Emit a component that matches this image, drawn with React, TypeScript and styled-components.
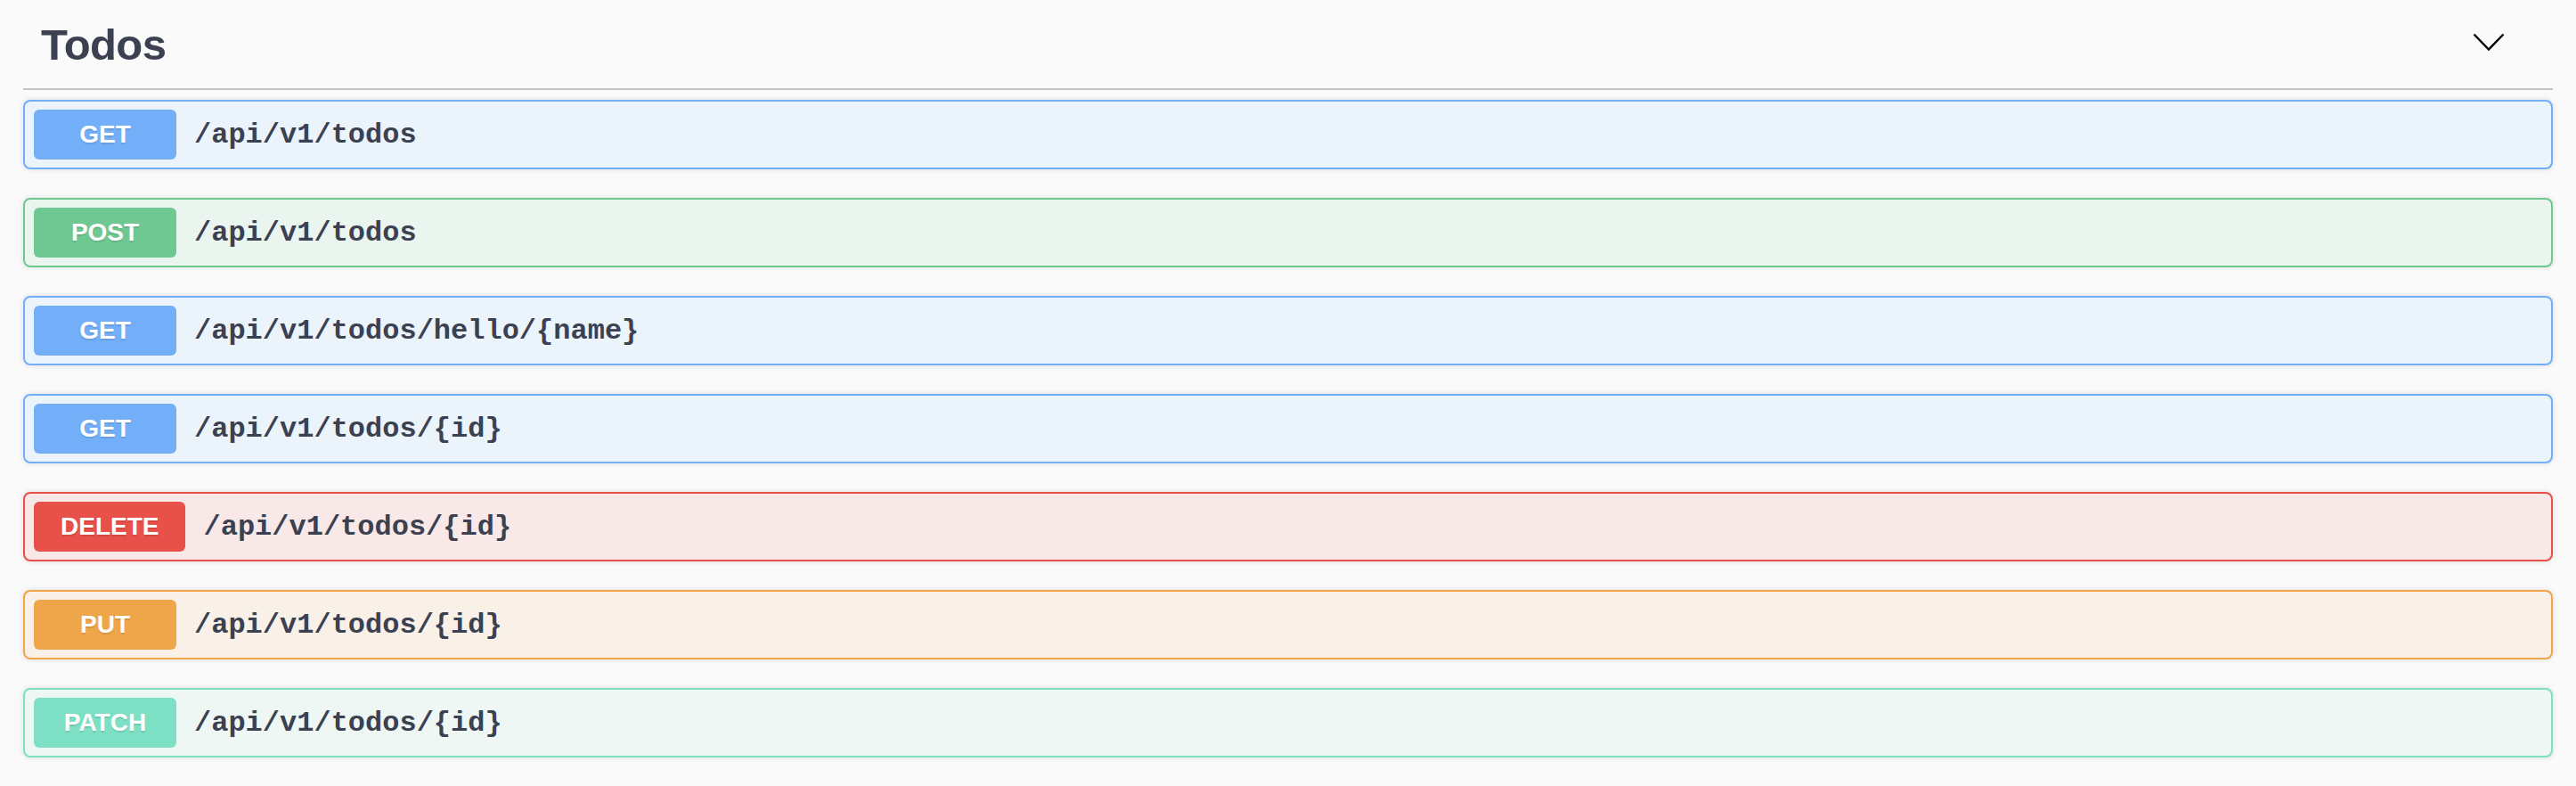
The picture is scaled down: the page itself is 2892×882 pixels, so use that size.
import React from 'react';
import styled, { createGlobalStyle } from 'styled-components';

type Method = 'GET' | 'POST' | 'DELETE' | 'PUT' | 'PATCH';

interface Operation {
    method: Method;
    path: string;
}

const methodColors : Record<Method, { main: string; bg: string }> = {
    GET: { main: '#73aef8', bg: '#ebf3fb' },
    POST: { main: '#6fc892', bg: '#ebf5ef' },
    DELETE: { main: '#e8504a', bg: '#f8e8e7' },
    PUT: { main: '#efa54a', bg: '#f9f1e8' },
    PATCH: { main: '#7ddfc3', bg: '#eef7f4' },
};

const operations : Operation[] = [
    { method: 'GET', path: '/api/v1/todos' },
    { method: 'POST', path: '/api/v1/todos' },
    { method: 'GET', path: '/api/v1/todos/hello/{name}' },
    { method: 'GET', path: '/api/v1/todos/{id}' },
    { method: 'DELETE', path: '/api/v1/todos/{id}' },
    { method: 'PUT', path: '/api/v1/todos/{id}' },
    { method: 'PATCH', path: '/api/v1/todos/{id}' },
];

const GlobalStyle = createGlobalStyle`
    html, body {
        margin: 0;
        padding: 0;
        background: #fafafa;
    }
    body {
        font-family: "Liberation Sans", Arial, sans-serif;
        color: #3b4151;
    }
`;

const Section = styled.section`
    padding: 0 26px 30px 26px;
`;

const TagHeader = styled.div`
    display: flex;
    align-items: center;
    justify-content: space-between;
    height: 99px;
    padding-left: 20px;
    border-bottom: 2px solid #c3c4c9;
`;

const TagTitle = styled.h3`
    margin: 0;
    font-family: "Liberation Sans", Arial, sans-serif;
    font-size: 49px;
    font-weight: 700;
    letter-spacing: -0.6px;
    color: #3b4151;
`;

const ChevronButton = styled.button`
    display: flex;
    align-items: center;
    justify-content: center;
    margin: 0 54px 5px 0;
    padding: 0;
    border: none;
    background: transparent;
    cursor: pointer;
`;

const OpList = styled.div`
    display: flex;
    flex-direction: column;
    gap: 32px;
    padding-top: 11px;
`;

const OpBlock = styled.div<{ $main: string; $bg: string }>`
    display: flex;
    align-items: center;
    height: 78px;
    box-sizing: border-box;
    padding: 0 10px;
    border: 2px solid ${p => p.$main};
    border-radius: 8px;
    background: ${p => p.$bg};
    box-shadow: 0 0 6px rgba(0, 0, 0, 0.12);
`;

const MethodBadge = styled.span<{ $main: string }>`
    display: flex;
    align-items: center;
    justify-content: center;
    min-width: 160px;
    height: 56px;
    box-sizing: border-box;
    padding: 0 30px;
    border-radius: 6px;
    background: ${p => p.$main};
    color: #fff;
    font-family: "Liberation Sans", Arial, sans-serif;
    font-size: 28px;
    font-weight: 700;
    text-shadow: 0 2px 0 rgba(0, 0, 0, 0.1);
`;

const PathText = styled.span`
    padding-left: 20px;
    font-family: "Liberation Mono", "Courier New", monospace;
    font-size: 32px;
    font-weight: 700;
    color: #3b4151;
`;

function Chevron()
{
    return (
        <svg width="36" height="20" viewBox="0 0 36 20">
            <polyline points="1.5,1.5 18,18.5 34.5,1.5" fill="none" stroke="#000" strokeWidth="2.4" />
        </svg>
    );
}

function App()
{
    return (
        <>
            <GlobalStyle />
            <Section>
                <TagHeader>
                    <TagTitle>Todos</TagTitle>
                    <ChevronButton aria-label="collapse">
                        <Chevron />
                    </ChevronButton>
                </TagHeader>
                <OpList>
                    {operations.map((op, index) => (
                        <OpBlock key={index} $main={methodColors[op.method].main} $bg={methodColors[op.method].bg}>
                            <MethodBadge $main={methodColors[op.method].main}>{op.method}</MethodBadge>
                            <PathText>{op.path}</PathText>
                        </OpBlock>
                    ))}
                </OpList>
            </Section>
        </>
    );
}

export default App;
